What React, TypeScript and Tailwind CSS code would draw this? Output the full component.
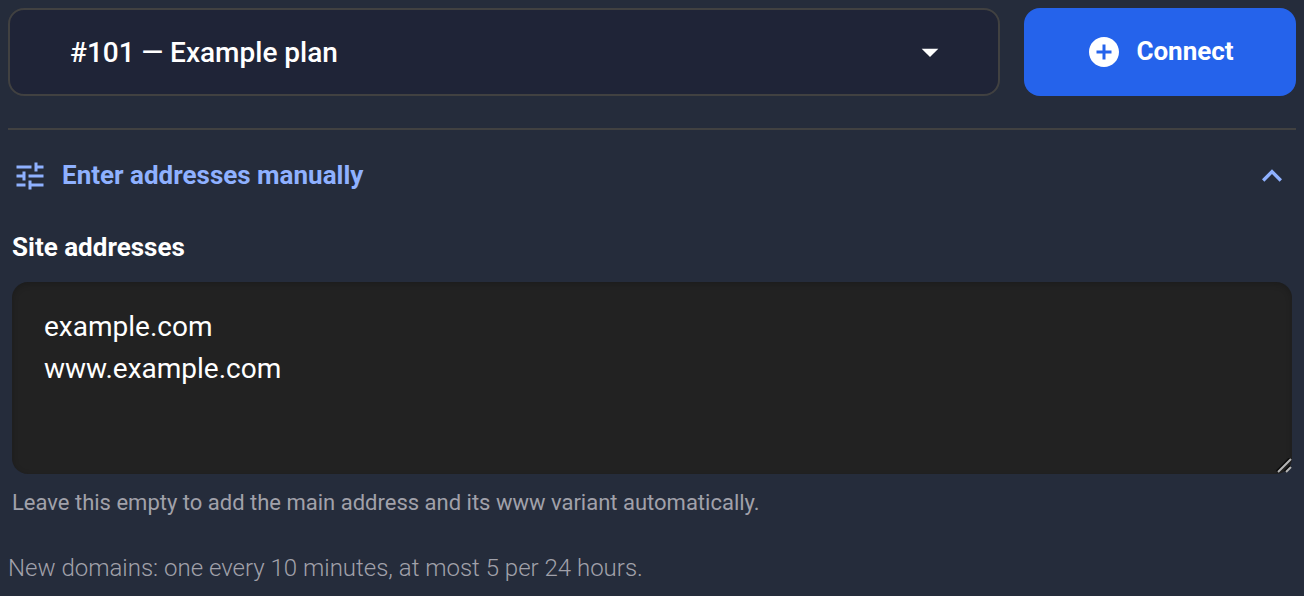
import { useState } from "react";
import { MdAddCircle, MdArrowDropDown, MdExpandLess, MdExpandMore, MdTune } from "react-icons/md";

function PlanPicker() {
  return (
    <div className="relative flex-1">
      <select
        aria-label="Plan"
        defaultValue="101"
        className="h-22 w-full appearance-none rounded-2xl border-2 border-[#414141] bg-[#1f2437] px-15 pt-0.5 text-[28px] font-medium text-white outline-none"
      >
        <option value="101">#101 — Example plan</option>
      </select>
      <MdArrowDropDown className="pointer-events-none absolute top-6 right-[50px] size-10 text-white" />
    </div>
  );
}

function ResizeGrip() {
  return (
    <svg
      viewBox="0 0 16 16"
      className="pointer-events-none absolute right-0 bottom-0 size-4"
      fill="none"
      strokeWidth="2"
    >
      <path d="M1 13.5 14.5 0M9 13.5 14.5 8" stroke="#0a0a0a" strokeWidth="3" />
      <path d="M2 14 15 1M10 14 15 9" stroke="#b4b4b4" />
    </svg>
  );
}

export default function App() {
  const [open, setOpen] = useState(true);
  return (
    <main className="min-h-screen bg-[#252c3b] p-2 font-[Roboto,sans-serif] text-white">
      <div className="flex gap-6">
        <PlanPicker />
        <button
          type="button"
          className="flex h-22 w-68 items-center justify-center gap-3.5 rounded-2xl bg-[#2563eb] text-[26px] font-bold"
        >
          <MdAddCircle className="size-9" />
          <span className="pb-0.5">Connect</span>
        </button>
      </div>

      <section className="mt-8 border-t-2 border-[#414141] px-1">
        <button
          type="button"
          aria-expanded={open}
          onClick={() => setOpen(!open)}
          className="flex h-23 w-full items-center gap-3.5 text-[26px] font-bold text-[#8fb1ff]"
        >
          <MdTune className="size-9" />
          <span className="pb-0.5">Enter addresses manually</span>
          {open ? <MdExpandLess className="ml-auto size-10" /> : <MdExpandMore className="ml-auto size-10" />}
        </button>
        {open && (
          <div>
            <label htmlFor="addresses" className="block pt-1 text-[26px] leading-[42px] font-bold">
              Site addresses
            </label>
            <div className="relative mt-3.5">
              <textarea
                id="addresses"
                aria-describedby="addresses-help"
                defaultValue={"example.com\nwww.example.com"}
                className="block h-48 w-full resize-y rounded-2xl bg-[#222222] px-8 py-6 text-[28px] leading-[42px] shadow-[inset_0_2px_6px_rgba(0,0,0,0.2)] outline-none [&::-webkit-resizer]:hidden"
              />
              <ResizeGrip />
            </div>
            <p id="addresses-help" className="mt-3 text-[22px] leading-[34px] text-[#a1a1aa]">
              Leave this empty to add the main address and its www variant automatically.
            </p>
          </div>
        )}
      </section>

      <p className="mt-[30px] text-2xl leading-9 font-light text-[#a1a1aa]">
        New domains: one every 10 minutes, at most 5 per 24 hours.
      </p>
    </main>
  );
}
